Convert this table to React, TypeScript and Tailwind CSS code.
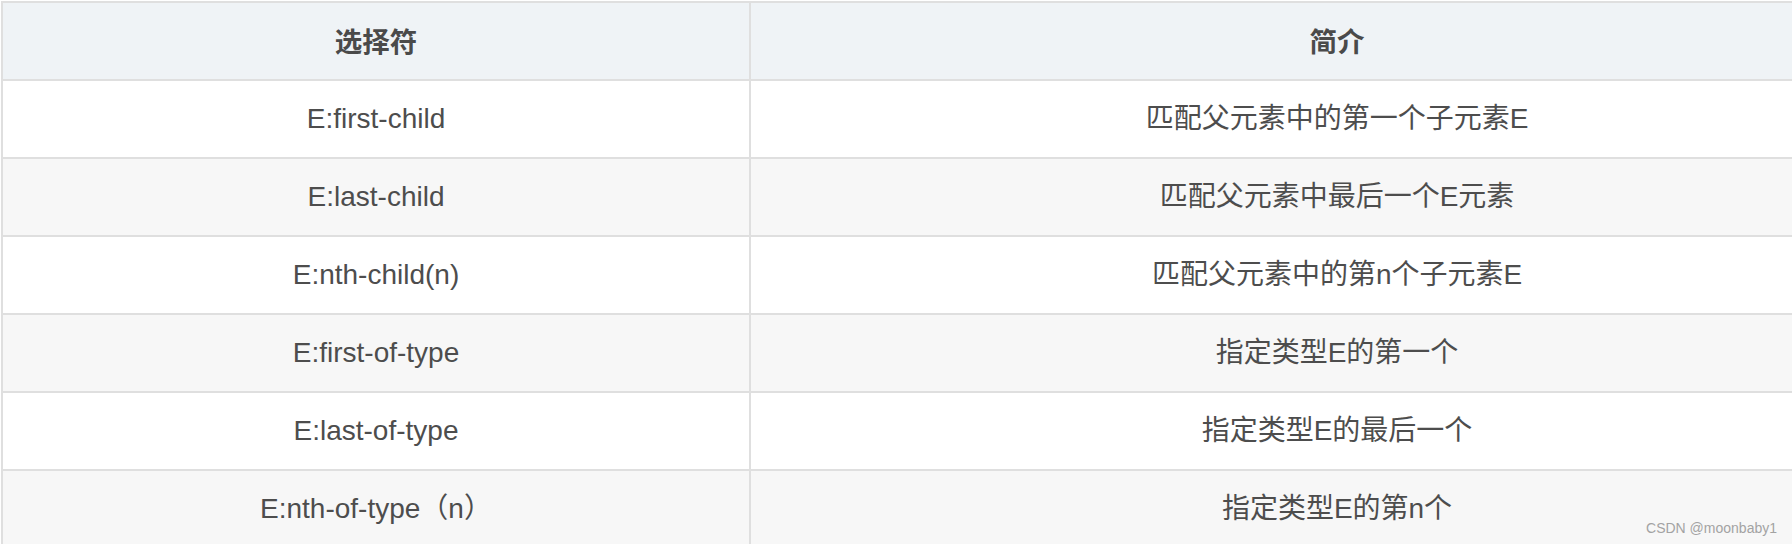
const rows = [
  { sel: "E:first-child", desc: "匹配父元素中的第一个子元素E" },
  { sel: "E:last-child", desc: "匹配父元素中最后一个E元素" },
  { sel: "E:nth-child(n)", desc: "匹配父元素中的第n个子元素E" },
  { sel: "E:first-of-type", desc: "指定类型E的第一个" },
  { sel: "E:last-of-type", desc: "指定类型E的最后一个" },
  { sel: "E:nth-of-type（n）", desc: "指定类型E的第n个" },
];

const App = () => {
  return (
    <div className="relative h-[544px] w-[1792px] overflow-hidden bg-white">
      <div className="ml-px mt-px w-[1926px] border-l-2 border-t-2 border-[#dfdfdf] font-['Liberation_Sans','Noto_Sans_CJK_SC',sans-serif] text-[#4d4d4d]">
        <div className="grid grid-cols-[748px_1174px] bg-[#eff3f6]">
          <div className="flex h-[78px] items-center justify-center border-b-2 border-r-2 border-[#dfdfdf] text-[27.5px] font-bold text-[#4a4a4a] font-['Noto_Sans_CJK_SC',sans-serif]">
            选择符
          </div>
          <div className="flex h-[78px] items-center justify-center border-b-2 border-r-2 border-[#dfdfdf] text-[27.5px] font-bold text-[#4a4a4a] font-['Noto_Sans_CJK_SC',sans-serif]">
            简介
          </div>
        </div>
        {rows.map((r, i) => (
          <div
            key={r.sel}
            className={
              i % 2 === 1
                ? "grid grid-cols-[748px_1174px] bg-[#f7f7f7]"
                : "grid grid-cols-[748px_1174px] bg-white"
            }
          >
            <div className="flex h-[78px] items-center justify-center border-b-2 border-r-2 border-[#dfdfdf] text-[28px]">
              {r.sel}
            </div>
            <div className="flex h-[78px] items-center justify-center border-b-2 border-r-2 border-[#dfdfdf] text-[28px]">
              {r.desc}
            </div>
          </div>
        ))}
      </div>
      <div className="absolute right-[15px] top-[518px] font-['Liberation_Sans',sans-serif] text-[14px] text-[#a3a3a3]">
        CSDN @moonbaby1
      </div>
    </div>
  );
};

export default App;
